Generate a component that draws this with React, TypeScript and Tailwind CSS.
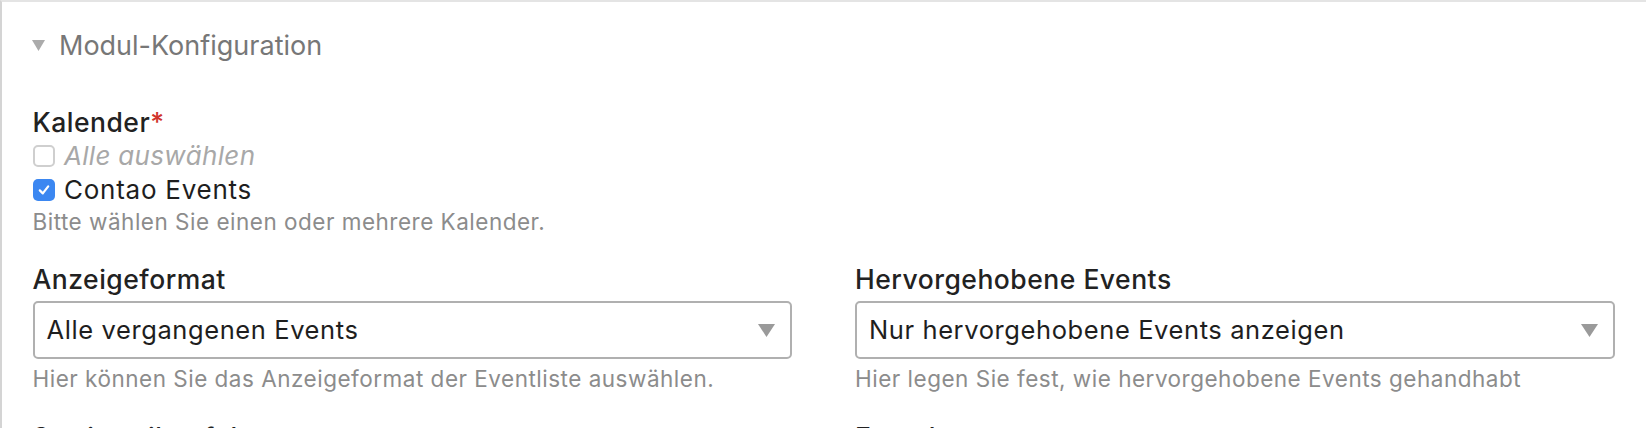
import React from "react";

const font = { fontFamily: "Inter, 'Liberation Sans', sans-serif" };

const Arrow = () => (
  <svg width="17" height="13" viewBox="0 0 17 13" className="shrink-0">
    <polygon points="0,0 17,0 8.5,13" fill="#9a9a9a" />
  </svg>
);

const Select = ({ value }: { value: string }) => (
  <div className="flex h-[58px] items-center justify-between rounded-[5px] border-2 border-[#b0b0b0] bg-white pl-[12px] pr-[15px]">
    <span className="text-[25.5px] leading-none tracking-[0.6px] text-[#1e1e1e]">{value}</span>
    <Arrow />
  </div>
);

const Field = ({ label, value, help }: { label: string; value: string; help: string }) => (
  <div className="flex flex-col">
    <div className="text-[26.5px] font-medium leading-[34px] tracking-[0.5px] text-[#222]">{label}</div>
    <div className="mt-[5px]">
      <Select value={value} />
    </div>
    <div className="mt-[5px] text-[22.5px] leading-[30px] tracking-[0.5px] text-[#8c8c8c]">{help}</div>
  </div>
);

export default function App() {
  return (
    <div
      className="h-[428px] overflow-hidden border-l-2 border-t-2 border-l-[#d4d4d4] border-t-[#e4e4e4] bg-white pl-[30.5px] pr-[31.5px] pt-[25px]"
      style={font}
    >
      <div className="flex h-[36px] items-center gap-[14px]">
        <svg width="13" height="11" viewBox="0 0 13 11" className="ml-[-0.5px]">
          <polygon points="0,0 13,0 6.5,11" fill="#ababab" />
        </svg>
        <span className="text-[27px] leading-none text-[#777]">Modul-Konfiguration</span>
      </div>

      <div className="mt-[43px] flex flex-col">
        <div className="text-[26.5px] font-medium leading-[33px] tracking-[0.5px] text-[#222]">
          Kalender<span className="text-[#d0342c]">*</span>
        </div>
        <div className="flex h-[34px] items-center gap-[9.5px]">
          <span className="h-[22px] w-[22px] rounded-[5px] border-2 border-[#cfcfcf] bg-white" />
          <span className="text-[26px] italic leading-none tracking-[0.3px] text-[#a8a8a8]">Alle auswählen</span>
        </div>
        <div className="flex h-[34px] items-center gap-[9.5px]">
          <span className="flex h-[22px] w-[22px] items-center justify-center rounded-[5px] bg-[#3b87f1]">
            <svg width="14" height="14" viewBox="0 0 14 14">
              <path d="M2.8 7.4 L5.8 10.4 L11.2 3.4" fill="none" stroke="#fff" strokeWidth="2.2" strokeLinecap="round" strokeLinejoin="round" />
            </svg>
          </span>
          <span className="text-[26px] leading-none tracking-[0.75px] text-[#1e1e1e]">Contao Events</span>
        </div>
        <div className="text-[22.5px] leading-[30px] tracking-[0.5px] text-[#8c8c8c]">Bitte wählen Sie einen oder mehrere Kalender.</div>
      </div>

      <div className="mt-[25px] grid grid-cols-2 gap-x-[63px]">
        <Field
          label="Anzeigeformat"
          value="Alle vergangenen Events"
          help="Hier können Sie das Anzeigeformat der Eventliste auswählen."
        />
        <Field
          label="Hervorgehobene Events"
          value="Nur hervorgehobene Events anzeigen"
          help="Hier legen Sie fest, wie hervorgehobene Events gehandhabt"
        />
        <div className="mt-[26px] text-[26.5px] font-medium leading-[34px] tracking-[0.5px] text-[#222]">Sortierreihenfolge</div>
        <div className="mt-[26px] text-[26.5px] font-medium leading-[34px] tracking-[0.5px] text-[#222]">Eventleser</div>
      </div>
    </div>
  );
}
